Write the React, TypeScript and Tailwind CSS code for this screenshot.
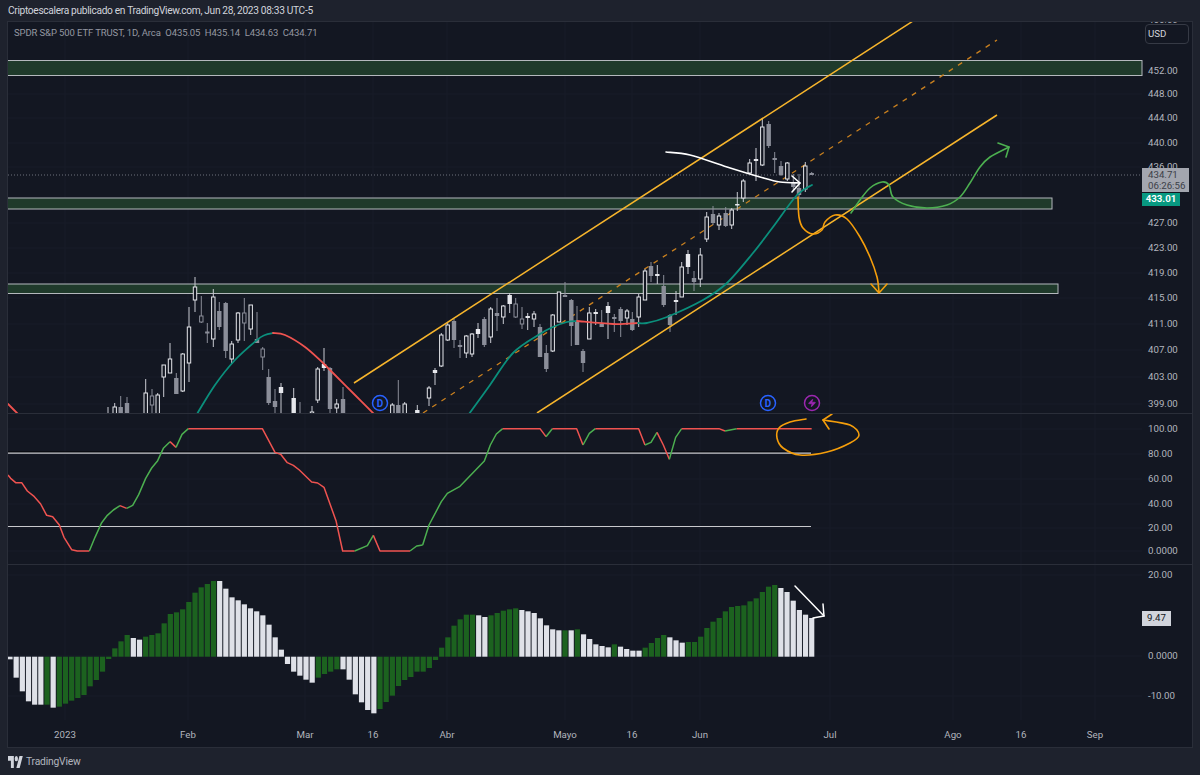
import { Zap } from 'lucide-react';

type Pt = number[];
type Kind = 'h' | 'g' | 'w' | 'o';
type Candle = [number, number, number, number, number, Kind];

const YELLOW = '#f7b52c';
const ORANGE = '#f59e0b';
const TEAL = '#0b8f7c';
const RED = '#ef5350';
const GREEN = '#4caf50';
const LABEL = '#b2b5be';
const GRID = '#191d29';

// x, wick top, wick bottom, body top, body bottom, kind
const CANDLES: Candle[] = [
  [108, 407, 414, 414, 414, 'h'], [114.7, 403, 414, 407, 414, 'h'], [120.7, 396, 414, 407, 414, 'g'], [127, 397, 414, 403, 414, 'g'],
  [145.7, 379, 414, 393, 414, 'h'], [152, 389, 414, 396, 405, 'o'], [157.7, 393, 414, 395, 414, 'h'], [163.7, 365, 397, 365, 377, 'h'],
  [170, 343, 373, 359, 373, 'h'], [176.3, 373, 394, 378, 394, 'g'], [182.7, 353, 392, 354, 391, 'h'], [189, 307, 382, 327, 363, 'h'],
  [195, 277, 312, 287, 300, 'h'], [201.3, 296, 323, 316, 322, 'o'], [207.3, 323, 343, 332, 333, 'o'], [213.3, 289, 347, 297, 339, 'h'],
  [219.3, 302, 330, 311, 327, 'g'], [225.7, 302, 358, 303, 351, 'g'], [231.7, 341, 364, 344, 359, 'h'], [238, 312, 343, 313, 340, 'h'],
  [244.3, 298, 341, 313, 323, 'o'], [250.7, 305, 335, 305, 329, 'h'], [257, 312, 343, 339, 343, 'g'], [262.7, 347, 370, 349, 357, 'o'],
  [268.7, 369, 405, 377, 403, 'g'], [275, 389, 414, 401, 407, 'g'], [281, 383, 414, 387, 393, 'w'], [293.7, 388, 414, 398, 414, 'w'],
  [300, 402, 414, 414, 414, 'g'], [312, 406, 414, 412, 414, 'h'], [317.7, 367, 403, 369, 400, 'h'], [324, 348, 371, 364, 368, 'w'],
  [330, 367, 414, 368, 409, 'g'], [336.7, 399, 414, 404, 408, 'h'], [343, 387, 414, 399, 414, 'g'], [392.3, 403, 414, 405, 414, 'h'],
  [398.3, 380, 414, 405, 414, 'g'], [404.7, 402, 414, 404, 414, 'h'], [417.3, 405, 414, 410, 414, 'w'], [429, 386, 406, 388, 398, 'h'],
  [435, 368, 385, 370, 373, 'w'], [441.3, 333, 367, 335, 366, 'h'], [447.7, 323, 341, 325, 340, 'h'], [454, 319, 348, 321, 340, 'g'],
  [460, 340, 358, 345, 347, 'g'], [466.3, 335, 358, 336, 353, 'h'], [472, 333, 357, 334, 354, 'h'], [478, 323, 338, 329, 334, 'w'],
  [484.3, 317, 347, 319, 345, 'g'], [490.7, 307, 343, 309, 337, 'h'], [497, 298, 331, 313, 316, 'g'], [503.3, 305, 324, 306, 317, 'h'],
  [509.7, 293, 313, 295, 304, 'w'], [515.7, 298, 318, 304, 317, 'o'], [522, 307, 329, 319, 324, 'o'], [527.7, 313, 330, 316, 318, 'w'],
  [534, 311, 327, 314, 319, 'h'], [540, 324, 357, 327, 357, 'g'], [546.3, 345, 372, 353, 369, 'g'], [552.7, 314, 352, 315, 351, 'h'],
  [559, 292, 322, 292, 322, 'h'], [565, 282, 297, 295, 297, 'g'], [571.3, 299, 346, 300, 326, 'g'], [577, 306, 345, 322, 345, 'g'],
  [583, 349, 372, 351, 363, 'g'], [589.3, 307, 339, 313, 339, 'h'], [595.7, 309, 325, 312, 314, 'w'], [601.7, 310, 327, 324, 327, 'g'],
  [608, 302, 339, 306, 313, 'w'], [614.3, 314, 332, 317, 319, 'g'], [620.7, 307, 337, 309, 321, 'g'], [627, 309, 325, 311, 318, 'h'],
  [632.3, 312, 331, 319, 330, 'g'], [638.7, 294, 327, 297, 317, 'h'], [645, 269, 300, 271, 300, 'h'], [651, 262, 282, 266, 276, 'g'],
  [657.3, 265, 284, 274, 276, 'w'], [663.7, 275, 307, 286, 305, 'g'], [670, 314, 332, 315, 325, 'g'], [676, 291, 315, 300, 302, 'w'],
  [681.7, 262, 297, 267, 297, 'h'], [688, 250, 274, 254, 267, 'w'], [694, 271, 291, 278, 282, 'g'], [700.3, 248, 287, 255, 279, 'h'],
  [706.7, 212, 242, 217, 239, 'h'], [713, 206, 225, 214, 223, 'g'], [719, 213, 230, 216, 225, 'h'], [725.7, 207, 227, 213, 226, 'g'],
  [731.7, 208, 229, 210, 225, 'h'], [737.3, 192, 211, 204, 205, 'w'], [743.3, 179, 202, 181, 198, 'h'], [749.7, 159, 174, 163, 173, 'h'],
  [756, 148, 181, 159, 161, 'w'], [762.3, 118, 166, 127, 165, 'h'], [768.7, 121, 148, 124, 146, 'g'], [774.7, 152, 173, 158, 160, 'g'],
  [781, 161, 176, 166, 175, 'g'], [787.3, 162, 181, 163, 179, 'h'], [793.3, 174, 191, 183, 187, 'g'], [799, 174, 197, 188, 195, 'g'],
  [805.3, 162, 192, 166, 189, 'h'], [811.7, 172, 175, 173, 175, 'g'],
];

const EMA: { color: string; pts: Pt[] }[] = [
  { color: RED, pts: [[8, 404], [18, 414]] },
  { color: TEAL, pts: [[197, 414], [215, 385], [235, 360], [257, 340], [265, 335], [273, 333]] },
  { color: RED, pts: [[273, 333], [285, 335], [305, 347], [323, 363], [333, 373], [355, 395], [374, 414]] },
  { color: TEAL, pts: [[469, 414], [490, 385], [513, 353], [540, 334], [553, 327], [567, 322], [577, 321]] },
  { color: RED, pts: [[577, 321], [613, 324], [638, 323]] },
  { color: TEAL, pts: [[638, 323], [647, 323], [667, 317], [703, 300], [727, 283], [753, 253], [773, 227], [797, 195], [812, 185]] },
];

const Z9 = (p: Pt): Pt => [p[0] / 3, 410 + p[1] / 3];
const Z10 = (p: Pt): Pt => [420 + p[0] / 3, 410 + p[1] / 3];

const RSI: { color: string; pts: Pt[] }[] = [
  { color: RED, pts: [[24, 195], [32, 205], [47, 218], [65, 218], [82, 243], [103, 260], [122, 282], [140, 316], [158, 320], [178, 345], [192, 382], [215, 419], [232, 423], [268, 423]].map(Z9) },
  { color: GREEN, pts: [[268, 423], [285, 382], [305, 338], [322, 316], [340, 300], [360, 287]].map(Z9) },
  { color: RED, pts: [[360, 287], [380, 295]].map(Z9) },
  { color: GREEN, pts: [[380, 295], [398, 286], [416, 254], [437, 205], [455, 174], [473, 152], [490, 115], [510, 95]].map(Z9) },
  { color: RED, pts: [[510, 95], [528, 112]].map(Z9) },
  { color: GREEN, pts: [[528, 112], [546, 73], [565, 56]].map(Z9) },
  { color: RED, pts: [[565, 56], [787, 56], [825, 127], [842, 133], [862, 158], [880, 166], [898, 180], [935, 216], [953, 219], [972, 232], [1008, 332], [1028, 423], [1064, 423]].map(Z9) },
  { color: GREEN, pts: [[1064, 423], [1102, 407], [1120, 376]].map(Z9) },
  { color: RED, pts: [[1120, 376], [1140, 423], [1230, 423]].map(Z9) },
  { color: GREEN, pts: [[1230, 423], [1250, 408], [1268, 405]].map(Z9) },
  { color: GREEN, pts: [[8, 405], [27, 345], [64, 275], [82, 250], [120, 229], [193, 153], [211, 105], [229, 72], [248, 56]].map(Z10) },
  { color: RED, pts: [[248, 56], [360, 56], [378, 80]].map(Z10) },
  { color: GREEN, pts: [[378, 80], [397, 56]].map(Z10) },
  { color: RED, pts: [[397, 56], [470, 56], [489, 105]].map(Z10) },
  { color: GREEN, pts: [[489, 105], [508, 70], [526, 56]].map(Z10) },
  { color: RED, pts: [[526, 56], [656, 56], [675, 105]].map(Z10) },
  { color: GREEN, pts: [[675, 105], [693, 97], [711, 67]].map(Z10) },
  { color: RED, pts: [[711, 67], [730, 105], [748, 148]].map(Z10) },
  { color: GREEN, pts: [[748, 148], [767, 82], [785, 56]].map(Z10) },
  { color: RED, pts: [[785, 56], [897, 56], [915, 63]].map(Z10) },
  { color: GREEN, pts: [[915, 63], [950, 56]].map(Z10) },
  { color: RED, pts: [[950, 56], [1175, 56]].map(Z10) },
];

// bar ends as read off at 3x, baseline 260
const HIST = [
  268, 323, 364, 394, 404, 404, 404, 413, 410, 401, 392, 384, 375, 349, 330, 305, 267, 235, 214, 195, 204, 209, 200, 195, 190, 160, 132, 127, 118, 96, 68, 52, 42, 33,
  33, 56, 82, 91, 103, 115, 124, 136, 164, 202, 239, 282, 305, 317, 329, 338, 323, 312, 305, 298, 298, 329, 373, 397, 420, 430, 417, 396, 377, 348, 330, 321, 305,
  305, 294, 270, 233, 202, 167, 148, 134, 134, 136, 141, 136, 129, 122, 118, 115, 120, 124, 129, 145, 166, 178, 181, 181, 181, 178, 193, 207, 223, 228, 232, 223,
  230, 237, 242, 242, 233, 219, 204, 195, 202, 211, 218, 216, 216, 200, 174, 155, 144, 124, 111, 108, 106, 94, 85, 66, 50, 45, 54, 66, 92, 120, 134, 144,
];
const HIST_RUNS = [6, 1, 1, 12, 2, 12, 16, 4, 6, 16, 2, 5, 7, 1, 1, 1, 5, 1, 4, 4, 3, 15, 6];
const HIST_WHITE: boolean[] = HIST_RUNS.flatMap((n, i) => Array(n).fill(i % 2 === 0));

const MAIN_TICKS: [string, number][] = [
  ['456.00', 20], ['452.00', 71], ['448.00', 94], ['444.00', 118], ['440.00', 143], ['436.00', 167], ['427.00', 223], ['423.00', 248],
  ['419.00', 273], ['415.00', 298], ['411.00', 324], ['407.00', 350], ['403.00', 377], ['399.00', 404],
];
const RSI_TICKS: [string, number][] = [['100.00', 429], ['80.00', 454], ['60.00', 479], ['40.00', 504], ['20.00', 528], ['0.0000', 551]];
const HIST_TICKS: [string, number][] = [['20.00', 575], ['0.0000', 656], ['-10.00', 696]];
const DATES: [string, number][] = [
  ['2023', 65], ['Feb', 188], ['Mar', 305], ['16', 373], ['Abr', 447], ['Mayo', 565], ['16', 632], ['Jun', 700], ['Jul', 830], ['Ago', 953], ['16', 1021], ['Sep', 1095],
];

function smooth(p: Pt[]) {
  let d = `M${p[0][0]} ${p[0][1]}`;
  for (let i = 0; i < p.length - 1; i++) {
    const a = p[i - 1] ?? p[i];
    const b = p[i];
    const c = p[i + 1];
    const e = p[i + 2] ?? c;
    d += ` C${b[0] + (c[0] - a[0]) / 6} ${b[1] + (c[1] - a[1]) / 6} ${c[0] - (e[0] - b[0]) / 6} ${c[1] - (e[1] - b[1]) / 6} ${c[0]} ${c[1]}`;
  }
  return d;
}

const line = (p: Pt[]) => p.map((q) => q.join(',')).join(' ');

function Grid({ ys, top, bottom }: { ys: number[]; top: number; bottom: number }) {
  return (
    <g stroke={GRID} strokeWidth={1}>
      {ys.map((y) => <line key={y} x1={8} x2={1142} y1={y} y2={y} />)}
      {DATES.map(([d, x]) => <line key={d + x} x1={x} x2={x} y1={top} y2={bottom} />)}
    </g>
  );
}

function Ticks({ ticks }: { ticks: [string, number][] }) {
  return (
    <g fill={LABEL} fontSize={9.7}>
      {ticks.map(([t, y]) => <text key={t} x={1148} y={y + 3}>{t}</text>)}
    </g>
  );
}

function Zone({ y, h, right }: { y: number; h: number; right: number }) {
  return <rect x={6} y={y} width={right - 6} height={h} fill="#1f3a2b" stroke="#b4b8bd" strokeWidth={1} />;
}

function CandleMark({ c }: { c: Candle }) {
  const [x, wt, wb, bt, bb, k] = c;
  const bright = k === 'h' || k === 'w';
  const color = bright ? '#e6e7ec' : '#8b8e99';
  const fill = k === 'h' || k === 'o' ? '#131722' : color;
  return (
    <g>
      <line x1={x} x2={x} y1={wt} y2={wb} stroke={bright ? '#c9cbd2' : '#8b8e99'} strokeWidth={1} />
      {k === 'h' || k === 'o' ? (
        <rect x={x - 1.7} y={bt} width={3.4} height={Math.max(bb - bt, 1)} fill={fill} stroke={color} strokeWidth={1} />
      ) : (
        <rect x={x - 2.2} y={bt} width={4.4} height={Math.max(bb - bt, 1.5)} fill={fill} />
      )}
    </g>
  );
}

function Badge({ x, color, children }: { x: number; color: string; children: React.ReactNode }) {
  return (
    <g>
      <circle cx={x} cy={403} r={7.5} fill="#131722" stroke={color} strokeWidth={1.5} />
      {children}
    </g>
  );
}

function Pen({ color, pts, head, width = 1.6 }: { color: string; pts: Pt[]; head: Pt[]; width?: number }) {
  return (
    <g fill="none" stroke={color} strokeWidth={width} strokeLinecap="round" strokeLinejoin="round">
      <path d={smooth(pts)} />
      <polyline points={line(head)} />
    </g>
  );
}

function MainPane() {
  return (
    <div className="relative h-[392px] overflow-hidden border-b border-[#2a2e39]">
      <svg className="block h-[391px] w-full" viewBox="8 22 1184 391">
        <Grid ys={MAIN_TICKS.map((t) => t[1])} top={22} bottom={413} />
        <Zone y={60.5} h={15} right={1142} />
        <Zone y={198} h={11} right={1052} />
        <Zone y={284} h={9.5} right={1058} />
        <line x1={8} x2={1142} y1={175} y2={175} stroke="#6f727c" strokeWidth={1} strokeDasharray="1 2" />
        <line x1={423} y1={413} x2={997} y2={40} stroke="#c9801f" strokeWidth={1.3} strokeDasharray="5 6" />
        {CANDLES.map((c) => <CandleMark key={c[0]} c={c} />)}
        <g fill="none" strokeWidth={1.8} strokeLinecap="round">
          {EMA.map((s) => <path key={s.pts[0].join()} d={smooth(s.pts)} stroke={s.color} />)}
        </g>
        <g stroke={YELLOW} strokeWidth={1.5}>
          <line x1={354} y1={383} x2={913} y2={21} />
          <line x1={537} y1={413} x2={997} y2={115} />
        </g>
        <Pen color="#ffffff" pts={[[666, 152], [690, 155], [727, 167], [760, 177], [780, 182], [800, 183]]} head={[[792, 176], [800, 183], [792, 192]]} />
        <Pen color={ORANGE} pts={[[798, 197], [799, 217], [803, 228], [813, 234], [822, 230], [825, 222], [835, 215], [847, 219], [860, 237], [870, 257], [877, 277], [879, 292]]} head={[[871, 284], [879, 293], [887, 284]]} />
        <Pen color={GREEN} pts={[[851, 213], [860, 200], [870, 188], [882, 182], [889, 185], [893, 197], [907, 205], [927, 208], [947, 205], [960, 197], [970, 183], [980, 167], [990, 157], [1009, 147]]} head={[[998, 143], [1009, 147], [1006, 157]]} />
        <Badge x={380} color="#2962ff"><text x={380} y={406.5} textAnchor="middle" fontSize={10} fontWeight={700} fill="#2962ff">D</text></Badge>
        <Badge x={768} color="#2962ff"><text x={768} y={406.5} textAnchor="middle" fontSize={10} fontWeight={700} fill="#2962ff">D</text></Badge>
        <Badge x={812} color="#9c27b0"><Zap x={807.5} y={398.5} width={9} height={9} color="#9c27b0" fill="#9c27b0" /></Badge>
        <Ticks ticks={MAIN_TICKS} />
      </svg>
      {/* currency box and price tags sit over the scale */}
      <div className="absolute left-[1137px] top-[2px] flex h-[20px] w-[44px] items-center rounded border border-[#363a45] bg-[#131722] pl-[2px] text-[9.7px] text-[#d1d4dc]">USD</div>
      <div className="absolute left-[1134px] top-[146px] flex h-[24px] w-[47px] flex-col items-start justify-center bg-[#a3a6af] pl-[6px] text-[9.7px] leading-[11.5px] text-[#3c3f48]">
        <span>434.71</span>
        <span>06:26:56</span>
      </div>
      <div className="absolute left-[1134px] top-[171px] flex h-[13px] w-[38px] items-center justify-center bg-[#089981] text-[9.7px] font-bold text-white">433.01</div>
    </div>
  );
}

function RsiPane() {
  return (
    <div className="h-[151px] border-b border-[#2a2e39]">
      <svg className="block h-[150px] w-full" viewBox="8 414 1184 150">
        <Grid ys={RSI_TICKS.map((t) => t[1])} top={414} bottom={564} />
        <line x1={8} x2={811} y1={452} y2={452} stroke="#000000" strokeWidth={1} />
        <line x1={8} x2={811} y1={453.2} y2={453.2} stroke="#c8c9cd" strokeWidth={1.2} />
        <line x1={8} x2={811} y1={526.5} y2={526.5} stroke="#c8c9cd" strokeWidth={1.2} />
        <g fill="none" strokeWidth={1.5} strokeLinejoin="round">
          {RSI.map((s) => <polyline key={s.pts[0].join()} points={line(s.pts)} stroke={s.color} />)}
        </g>
        <Pen color={ORANGE} pts={[[806, 419], [790, 422], [779, 428], [777, 438], [783, 448], [800, 455], [827, 452], [850, 443], [859, 435], [850, 425], [823, 420]]} head={[[832, 414], [823, 420], [829, 429]]} />
        <Ticks ticks={RSI_TICKS} />
      </svg>
    </div>
  );
}

function HistPane() {
  return (
    <div className="relative h-[155px]">
      <svg className="block h-full w-full" viewBox="8 565 1184 155">
        <Grid ys={[575, 656, 696]} top={565} bottom={720} />
        {HIST.map((v, i) => {
          const x = 10 + i * 6.167;
          const y = 570 + v / 3;
          const base = 656.7;
          return <rect key={i} x={x - 2.6} y={Math.min(y, base)} width={5.2} height={Math.abs(y - base)} fill={HIST_WHITE[i] ? '#dfe1e8' : '#1c621f'} />;
        })}
        <g fill="none" stroke="#ffffff" strokeWidth={1.5} strokeLinecap="round" strokeLinejoin="round">
          <line x1={795} y1={586} x2={824} y2={616} />
          <polyline points="823,604 824,616 813,618" />
        </g>
        <Ticks ticks={HIST_TICKS} />
      </svg>
      <div className="absolute left-[1134px] top-[46px] flex h-[15px] w-[29px] items-center justify-center bg-[#d1d4dc] text-[9.7px] text-[#131722]">9.47</div>
    </div>
  );
}

function TimeAxis() {
  return (
    <svg className="block h-[27px] w-full" viewBox="8 720 1184 27">
      <g fill={LABEL} fontSize={9.7} textAnchor="middle">
        {DATES.map(([d, x]) => <text key={d + x} x={x} y={738}>{d}</text>)}
      </g>
    </svg>
  );
}

export default function App() {
  return (
    <div className="flex h-[775px] w-[1200px] flex-col overflow-hidden bg-[#1e222d] [font-family:Roboto,sans-serif]">
      <div className="flex h-[21px] items-center pl-[8px] text-[10.2px] tracking-[-0.33px] text-[#d1d4dc]">
        Criptoescalera publicado en TradingView.com, Jun 28, 2023 08:33 UTC-5
      </div>
      <div className="relative mx-[7px] flex h-[727px] flex-col border border-[#2a2e39] bg-[#131722]">
        <div className="absolute left-[6px] top-[3px] z-10 whitespace-pre text-[9.5px] leading-[16px] tracking-[-0.1px] text-[#9598a1]">
          SPDR S&amp;P 500 ETF TRUST, 1D, Arca{'  '}O435.05{'  '}H435.14{'  '}L434.63{'  '}C434.71
        </div>
        <MainPane />
        <RsiPane />
        <HistPane />
        <TimeAxis />
      </div>
      <div className="flex flex-1 items-center gap-[3px] pl-[8px] text-[10.3px] tracking-[-0.2px] text-[#b2b5be]">
        <svg className="h-[12px] w-[15px]" viewBox="0 4 36 18" fill="#d1d4dc" preserveAspectRatio="none">
          <path d="M14 22H7V11H0V4h14v18zM28 22h-8l7.5-18h8L28 22z" />
          <circle cx="20" cy="8" r="4" />
        </svg>
        <span>TradingView</span>
      </div>
    </div>
  );
}
